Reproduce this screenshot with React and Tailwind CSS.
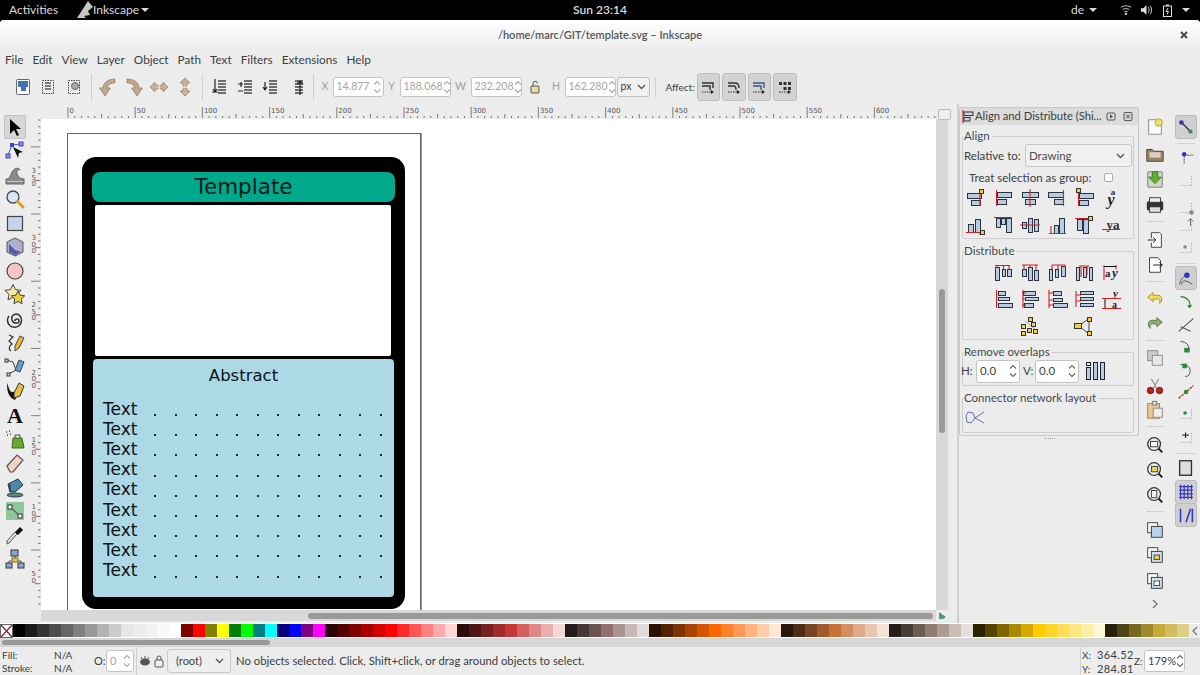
const ui = { fontFamily: 'Lato, "Noto Sans", sans-serif' };

const paletteColors = [
  '#000000', '#1a1a1a', '#333333', '#4d4d4d', '#666666', '#808080', '#999999', '#b3b3b3', '#cccccc', '#e6e6e6', '#ececec', '#f2f2f2', '#f9f9f9', '#ffffff',
  '#800000', '#ff0000', '#808000', '#ffff00', '#008000', '#00ff00', '#008080', '#00ffff', '#000080', '#0000ff', '#800080', '#ff00ff',
  '#2b0000', '#550000', '#800000', '#aa0000', '#d40000', '#ff0000', '#ff2a2a', '#ff5555', '#ff8080', '#ffaaaa', '#ffd5d5',
  '#280b0b', '#501616', '#782121', '#a02c2c', '#c83737', '#d35f5f', '#de8787', '#e9afaf', '#f4d7d7',
  '#241c1c', '#483737', '#6c5353', '#916f6f', '#ac9393', '#c8b7b7', '#e3dbdb',
  '#2b1100', '#552200', '#803300', '#aa4400', '#d45500', '#ff6600', '#ff7f2a', '#ff9955', '#ffb380', '#ffccaa', '#ffe6d5',
  '#28170b', '#502d16', '#784421', '#a05a2c', '#c87137', '#d38d5f', '#deaa87', '#e9c6af', '#f4e3d7',
  '#241f1c', '#483e37', '#6c5d53', '#917c6f', '#ac9d93', '#c8beb7', '#e3dedb',
  '#2b2200', '#554400', '#806600', '#aa8800', '#d4aa00', '#ffcc00', '#ffd42a', '#ffdd55', '#ffe680', '#ffeeaa', '#fff6d5',
  '#28220b', '#504416', '#786721', '#a0892c', '#c8ab37', '#d3bc5f', '#decd87',
];

function Ico({ children, size = 22 }) {
  return (
    <svg width={size} height={size} viewBox="0 0 22 22" fill="none" className="shrink-0">
      {children}
    </svg>
  );
}

function Caret({ className = '' }) {
  return <span className={`inline-block h-0 w-0 border-x-[4px] border-t-[4px] border-x-transparent border-t-[#d8d8d8] ${className}`} />;
}

function Chevron() {
  return (
    <svg width="9" height="6" viewBox="0 0 9 6" fill="none" stroke="#555" strokeWidth="1.3">
      <path d="M1 1l3.5 3.5L8 1" />
    </svg>
  );
}

function Spin({ w, value, disabled, h = 'h-[20px]' }) {
  return (
    <div className={`flex ${h} shrink-0 items-center justify-between rounded-[3px] border border-[#c4c4c4] bg-white pl-[3px] pr-[2px] ${disabled ? 'text-[#a4a4a4]' : 'text-[#3a3f41]'} ${w}`}>
      <span className="whitespace-nowrap">{value}</span>
      <svg width="8" height="14" viewBox="0 0 8 14" fill="none" stroke={disabled ? '#aaa' : '#666'} strokeWidth="1.1" className="shrink-0">
        <path d="M1 4.5L4 1.5l3 3M1 9.5l3 3 3-3" />
      </svg>
    </div>
  );
}

function starPoints(cx, cy, r) {
  const pts = [];
  for (let i = 0; i < 10; i++) {
    const rad = i % 2 === 0 ? r : r * 0.5;
    const a = -Math.PI / 2 + (i * Math.PI) / 5;
    pts.push(`${(cx + rad * Math.cos(a)).toFixed(1)},${(cy + rad * Math.sin(a)).toFixed(1)}`);
  }
  return pts.join(' ');
}

// ---- top toolbar icons
const boxSel = (extra) => (
  <Ico>
    <rect x="5.5" y="4.5" width="11" height="13" stroke="#444" strokeDasharray="1.5 1" />
    {extra}
  </Ico>
);

function Turn({ flip }) {
  return (
    <Ico>
      <g transform={flip ? 'translate(22 0) scale(-1 1)' : ''}>
        <path d="M18 3C12 3 6 6 6 12H2.500L8 20l5.500-8H10.500c0-3 3-5 7.500-5z" fill="#c0a68c" stroke="#8f7a66" strokeWidth="0.7" />
      </g>
    </Ico>
  );
}

function FlipIcon({ vertical }) {
  return (
    <Ico>
      <g transform={vertical ? 'rotate(90 11 11)' : ''}>
        <path d="M2 11l5-5v3h8V6l5 5-5 5v-3H7v3z" fill="#c9b29a" stroke="#8f7a66" strokeWidth="0.7" />
        <path d="M11 7v8" stroke="#fff" strokeWidth="1" />
      </g>
    </Ico>
  );
}

function Layering({ arrow }) {
  return (
    <Ico>
      <path d="M10 5h8M10 8h8M10 11h8M10 14h8M10 17h8" stroke="#444" strokeWidth="1.6" />
      <path d={arrow} stroke="#222" strokeWidth="1.2" fill="none" />
    </Ico>
  );
}

function AffectIcon({ variant }) {
  return (
    <Ico>
      {variant === 3 ? (
        <g fill="#333">
          <rect x="5" y="6" width="3" height="3" />
          <rect x="9.500" y="6" width="3" height="3" />
          <rect x="14" y="6" width="3" height="3" />
          <rect x="9.500" y="11" width="3" height="3" />
          <rect x="14" y="11" width="3" height="3" />
        </g>
      ) : (
        <path d={variant === 1 ? 'M5 7h7c3 0 4 2 4 5M5 10h6c2 0 2 2 2 4' : 'M5 7h11v5M5 10h8v4'} stroke={variant === 2 ? '#3b5a80' : '#333'} strokeWidth="1.400" />
      )}
      <path d="M5 16h9" stroke="#333" strokeWidth="1" strokeDasharray="1.500 1" />
      <path d="M14 14l3 2-3 2z" fill="#222" />
    </Ico>
  );
}

function Toolbar() {
  const Sep = () => <div className="mx-[4px] h-[26px] w-px bg-[#cfcfcf]" />;
  const Btn = ({ children }) => <div className="flex w-[25.500px] justify-center">{children}</div>;
  return (
    <div className="flex h-[33px] items-center pl-[10px] pt-[1px] text-[10.500px] text-[#a0a0a0]">
      <Btn>
        <Ico>
          <rect x="4.500" y="3.500" width="13" height="15" rx="1" fill="#fff" stroke="#667" />
          <rect x="6" y="5" width="10" height="6" fill="#3f73b5" />
          <rect x="9" y="11" width="5" height="4" fill="#3f73b5" />
        </Ico>
      </Btn>
      <Btn>{boxSel(<path d="M8 7h6M8 10h6M8 13h6" stroke="#555" strokeWidth="1.500" />)}</Btn>
      <Btn>{boxSel(<circle cx="12" cy="10" r="3.500" fill="#aaa" stroke="#666" />)}</Btn>
      <Sep />
      <Btn><Turn /></Btn>
      <Btn><Turn flip /></Btn>
      <Btn><FlipIcon /></Btn>
      <Btn><FlipIcon vertical /></Btn>
      <Sep />
      <Btn><Layering arrow="M7 3v13M4 16h6M5 13l2 3 2-3" /></Btn>
      <Btn><Layering arrow="M4 8h5M7 6v5M4 15h5" /></Btn>
      <Btn><Layering arrow="M6 6v7M4 11l2 3 2-3" /></Btn>
      <Btn><Layering arrow="M15 19V6M12 8l3-3 3 3" /></Btn>
      <Sep />
      <span className="w-[15px] text-center">X</span>
      <Spin w="w-[51px]" value="14.877" disabled />
      <span className="w-[16px] text-center">Y</span>
      <Spin w="w-[51px]" value="188.068" disabled />
      <span className="w-[20px] text-center">W</span>
      <Spin w="w-[51px]" value="232.208" disabled />
      <div className="flex w-[26px] justify-center">
        <svg width="12" height="14" viewBox="0 0 12 14" fill="none">
          <rect x="2" y="6" width="8" height="7" rx="1" fill="#e8dc9a" stroke="#555" />
          <path d="M4 6V3.500a2.200 2.200 0 0 1 4.400 0" stroke="#555" />
        </svg>
      </div>
      <span className="w-[17px] text-center">H</span>
      <Spin w="w-[51px]" value="162.280" disabled />
      <div className="ml-[1px] flex h-[20px] w-[33px] items-center justify-between rounded-[3px] border border-[#c0c0c0] bg-[#f1f1f1] px-[3px] text-[#3a3f41]">
        px <Chevron />
      </div>
      <div className="ml-[5px] h-[20px] w-px bg-[#cfcfcf]" />
      <span className="ml-[10px] mr-[7px] w-[24px] whitespace-nowrap text-[10px] text-[#3a3f41]">Affect:</span>
      {[0, 1, 2, 3].map((v) => (
        <div key={v} className="mr-[2px] flex h-[28px] w-[23.500px] items-center justify-center rounded-[3px] border border-[#bdbdbd] bg-[#d3d3d3]">
          <AffectIcon variant={v} />
        </div>
      ))}
    </div>
  );
}

// ---- tool column
const tools = [
  <path d="M6 3v15l4-4 3 6 2-1-3-6h5z" fill="#000" />,
  <><path d="M4 15L8 5l9-1" stroke="#55c" /><rect x="2" y="14" width="4" height="4" fill="#88e" stroke="#44a" /><rect x="6" y="3" width="4" height="4" fill="#44c" /><rect x="15" y="2" width="4" height="4" fill="#88e" stroke="#44a" /><path d="M9 7l10 5-4 1 -1 5z" fill="#111" /></>,
  <><path d="M2 20V15C6 15 6 12 8 8C10 4 15 3 16 6C14 5 12 7 13 10C14 13 17 15 20 15V20z" fill="#8a8a8a" stroke="#666" /><path d="M3 17.500h16" stroke="#c4c4c4" /></>,
  <><circle cx="9" cy="9" r="6" fill="#d8e6f4" stroke="#445" strokeWidth="1.300" /><path d="M13.500 13.500L19 19" stroke="#e0a020" strokeWidth="3" strokeLinecap="round" /></>,
  <rect x="3.500" y="4.500" width="15" height="14" fill="#c3d3e8" stroke="#444" strokeWidth="1.200" />,
  <><path d="M11 2l8 4v10l-8 4-8-4V6z" fill="#b0aed0" stroke="#555" /><path d="M5 8l6 6 6 2-6 3-6-3z" fill="#5858a8" /></>,
  <circle cx="11" cy="11" r="8" fill="#f7c4c8" stroke="#444" strokeWidth="1.200" />,
  <><polygon points={starPoints(9, 9, 8.500)} fill="#f5eaa8" stroke="#444" /><polygon points={starPoints(14, 14, 7)} fill="#e8d040" stroke="#444" /></>,
  <path d="M11 11a2 2 0 1 1 2 2 4.500 4.500 0 1 1 3-7 7 7 0 1 1-11 0" stroke="#333" strokeWidth="1.500" transform="translate(0 2)" />,
  <><path d="M5 3l4 2-4 4 3 3c-3 2-4 5-1 7" stroke="#333" strokeWidth="1.200" /><path d="M11 14L16 4l4 2-5 10-4 3z" fill="#e8b830" stroke="#444" /></>,
  <><path d="M2 4l7 2 3 8M3 19L12 14" stroke="#444" /><rect x="1" y="3" width="3" height="3" fill="#ddd" stroke="#333" /><rect x="3" y="17" width="3" height="3" fill="#ddd" stroke="#333" /><path d="M11 14l4-10 5 2-4 10z" fill="#6a9ac8" stroke="#345" /></>,
  <><path d="M3 3c0 8 1 14 8 17 4-6 1-9-2-8S5 8 3 3z" fill="#111" /><path d="M10 13l5-10 5 3-4 10-6 2z" fill="#e8c040" stroke="#333" /></>,
  <text x="11" y="19" textAnchor="middle" fontSize="22" fontWeight="700" fontFamily="Liberation Serif, serif" fill="#111">A</text>,
  <><path d="M2 4h1M5 3h1M3 7h1M6 6h1" stroke="#444" strokeWidth="1.500" /><path d="M9 10h9l2 10H8z" fill="#66a830" stroke="#3a6a18" /><path d="M11 10V7h5v3" stroke="#445" /></>,
  <path d="M3 14L13 3l6 5-10 12-3 0z" fill="#f6d0c0" stroke="#555" strokeWidth="1.200" />,
  <><ellipse cx="11" cy="19" rx="8" ry="2" fill="#5a8a6a" stroke="#345" /><path d="M4 8l10-5 5 6-8 7H6z" fill="#4a8ab0" stroke="#234" /><path d="M6 8v8" stroke="#222" /></>,
  <><rect x="2" y="2" width="18" height="18" fill="#8cc89a" /><path d="M6 7l10 9" stroke="#333" /><rect x="4" y="5" width="4" height="4" fill="#fff" stroke="#333" /><rect x="14" y="14" width="4" height="4" fill="#fff" stroke="#333" /></>,
  <><path d="M3 20l2-1 8-9-2-2-8 9z" fill="#ddd" stroke="#555" /><path d="M11 8l3-3 2-2 3 3-2 2-3 3z" fill="#111" /></>,
  <><path d="M11 8v5M5 16v-3h12v3" stroke="#555" /><rect x="7" y="2" width="7" height="6" fill="#8aa8c8" stroke="#334" /><rect x="2" y="15" width="6" height="5" fill="#8aa8c8" stroke="#334" /><rect x="14" y="15" width="6" height="5" fill="#8aa8c8" stroke="#334" /><rect x="8" y="10" width="6" height="4" fill="#e8c040" stroke="#864" /></>,
];

function ToolColumn() {
  return (
    <div className="flex w-[30px] shrink-0 flex-col items-center pt-[11px]">
      {tools.map((t, i) => (
        <div key={i} className={`flex h-[24px] w-[22px] shrink-0 items-center justify-center rounded-[2px] ${i === 0 ? 'border border-[#c0c0c0] bg-[#d6d6d6]' : ''}`}>
          <Ico>{t}</Ico>
        </div>
      ))}
    </div>
  );
}

// ---- rulers
function TopRuler() {
  const labels = [0, 50, 100, 150, 200, 250, 300, 350, 400, 450, 500, 550, 600];
  const ticks = Array.from({ length: 135 }, (_, i) => i);
  return (
    <svg width="895" height="15" className="block shrink-0">
      {ticks.map((i) => {
        const x = 27 + i * 6.72;
        const major = i % 10 === 0;
        if (major) return <path key={i} d={`M${x} 3V14`} stroke="#666" strokeWidth="0.8" />;
        return <path key={i} d={`M${x} ${i % 5 === 0 ? 10 : 12}V14`} stroke="#666" strokeWidth="0.9" />;
      })}
      {labels.map((l, i) => (
        <text key={l} x={28.500 + i * 67.2} y="9" fontSize="7" fill="#555" fontFamily="DejaVu Sans, sans-serif">{l}</text>
      ))}
    </svg>
  );
}

function LeftRuler() {
  const labels = ['350', '300', '250', '200', '150', '100', '50'];
  const ticks = Array.from({ length: 74 }, (_, i) => i);
  return (
    <svg width="11" height="491" className="block shrink-0">
      {ticks.map((i) => {
        const y = 1 + i * 6.72;
        const major = (i + 6) % 10 === 0;
        if (major) return <path key={i} d={`M1 ${y}H10.500`} stroke="#666" strokeWidth="0.8" />;
        return <path key={i} d={`M${(i + 6) % 5 === 0 ? 5 : 8} ${y}H10.500`} stroke="#666" strokeWidth="0.9" />;
      })}
      {labels.map((l, i) =>
        l.split('').map((d, k) => (
          <text key={`${l}${k}`} x="1.500" y={54 + i * 67.2 + k * 6.500} fontSize="7" fill="#555" fontFamily="DejaVu Sans, sans-serif">{d}</text>
        )),
      )}
    </svg>
  );
}

// ---- drawing
function Card() {
  const rows = Array.from({ length: 9 }, (_, i) => i);
  const dots = Array.from({ length: 12 }, (_, i) => i);
  return (
    <div className="ml-[14px] mt-[23px] flex w-[323px] flex-col rounded-[14px] bg-black pt-[15px] pb-[12px]" style={{ fontFamily: '"DejaVu Sans", sans-serif' }}>
      <div className="mx-[10px] flex h-[30px] items-center justify-center rounded-[8px] bg-[#00a98c] text-[21.500px] leading-none text-[#0a1a18]">Template</div>
      <div className="ml-[13px] mt-[3px] h-[151px] w-[296px] rounded-[2px] bg-white" />
      <div className="ml-[11px] mt-[3px] h-[238px] w-[301px] rounded-[4px] bg-[#add8e6] text-[#0c1418]">
        <div className="pt-[7px] text-center text-[16.500px] leading-[20px]">Abstract</div>
        <div className="mt-[13px] flex flex-col pl-[10px]">
          {rows.map((r) => (
            <div key={r} className="flex h-[20.200px] items-center text-[17px] leading-none">
              <span className="w-[51px]">Text</span>
              <div className="flex w-[228px] justify-between pt-[12px]">
                {dots.map((d) => (
                  <span key={d} className="h-[2px] w-[2px] bg-[#1a2a30]" />
                ))}
              </div>
            </div>
          ))}
        </div>
      </div>
    </div>
  );
}

function CanvasArea() {
  return (
    <div className="flex w-[918px] shrink-0 flex-col">
      <div className="flex h-[15px] items-end">
        <div className="w-[11px]" />
        <TopRuler />
        <div className="relative flex-1">
          <div className="absolute -top-[10px] left-[2px] h-[11px] w-[13px] rounded-[2px] border border-[#bbb] bg-[#eee]" />
        </div>
      </div>
      <div className="flex h-[491px]">
        <LeftRuler />
        <div className="flex-1 overflow-hidden bg-white pl-[26px] pt-[14px]">
          <div className="h-[520px] w-[354px] border border-b-0 border-[#666] shadow-[1px_0_0_#999]">
            <Card />
          </div>
        </div>
        <div className="flex w-[12px] justify-center bg-[#d8d8d8]">
          <div className="mt-[170px] h-[144px] w-[6px] rounded-full bg-[#999]" />
        </div>
      </div>
      <div className="flex h-[11px] items-stretch">
        <div className="w-[11px]" />
        <div className="flex flex-1 items-center bg-[#d8d8d8] pl-[267px] pr-[3px]">
          <div className="h-[6px] flex-1 rounded-full bg-[#999]" />
        </div>
        <div className="flex w-[12px] items-center justify-center">
          <svg width="9" height="9" viewBox="0 0 9 9"><path d="M1 1l7 5-3 2H1z" fill="#4a9a80" /></svg>
        </div>
      </div>
    </div>
  );
}

// ---- align panel
const R = ({ x, y, w, h }) => <rect x={x + 0.500} y={y + 0.500} width={w} height={h} fill="#b9cbe0" stroke="#2a3440" />;
const Red = ({ d }) => <path d={d} stroke="#d02020" strokeWidth="1.100" />;
const Y = ({ x, y }) => <rect x={x + 0.500} y={y + 0.500} width="4" height="4" fill="#f0d040" stroke="#333" />;
const HStack = (
  <><R x={2} y={6} w={14} h={5} /><R x={6} y={13} w={9} h={5} /></>
);

const alignIcons = [
  <>{HStack}<Red d="M15 4v15" /><Y x={14} y={2} /></>,
  <><R x={5} y={5} w={14} h={5} /><R x={5} y={12} w={9} h={5} /><Red d="M4.500 3v16" /></>,
  <><R x={3} y={5} w={16} h={5} /><R x={6} y={12} w={10} h={5} /><Red d="M11 2v18" /></>,
  <><R x={2} y={5} w={15} h={5} /><R x={8} y={12} w={9} h={5} /><Red d="M17.500 3v16" /></>,
  <><R x={6} y={6} w={14} h={5} /><R x={6} y={13} w={9} h={5} /><Red d="M5.500 3v16M3 5h5" /><Y x={3} y={1} /></>,
  <><text x="11" y="18" fontSize="16" fontWeight="700" fontFamily="Liberation Serif, serif" fontStyle="italic" fill="#222" textAnchor="middle">y</text><text x="13" y="8" fontSize="9" fontWeight="700" fontFamily="Liberation Serif, serif" fill="#334" textAnchor="middle">a</text></>,
  <><R x={3} y={10} w={5} h={8} /><R x={10} y={5} w={5} h={13} /><Red d="M1 18.500h16M15 18v3" /><Y x={15} y={16} /></>,
  <><R x={4} y={4} w={4} h={9} /><R x={9} y={4} w={4} h={6} /><R x={14} y={4} w={5} h={14} /><Red d="M2 3.500h18" /></>,
  <><R x={3} y={8} w={4} h={6} /><R x={9} y={4} w={4} h={14} /><R x={15} y={5} w={4} h={12} /><Red d="M1 11h20" /></>,
  <><R x={8} y={11} w={4} h={8} /><R x={13} y={4} w={5} h={15} /><Red d="M3 19.500h17M5 12v7" /></>,
  <><R x={4} y={5} w={5} h={11} /><R x={10} y={5} w={5} h={14} /><Red d="M2 4.500h14" /><Y x={15} y={2} /></>,
  <><text x="13" y="15" fontSize="13" fontWeight="700" fontFamily="Liberation Serif, serif" fill="#333" textAnchor="middle">ya</text><Red d="M2 15.500h18" /></>,
];

const distributeIcons = [
  <><R x={3} y={6} w={4} h={13} /><R x={10} y={8} w={3} h={7} /><R x={15} y={8} w={4} h={7} /><Red d="M3 4.500h15M5 4v3M11.500 4v4M17 4v4" /></>,
  <><R x={3} y={8} w={4} h={7} /><R x={9} y={6} w={4} h={13} /><R x={15} y={9} w={4} h={10} /><Red d="M3 4h16M5 4v4M11 4v2M17 4v5" /></>,
  <><R x={3} y={8} w={3} h={11} /><R x={9} y={8} w={3} h={8} /><R x={15} y={5} w={4} h={10} /><Red d="M6 4h13M6 4v4M12 4v4M19 4v2" /></>,
  <><R x={3} y={6} w={3} h={13} /><R x={10} y={6} w={3} h={10} /><R x={16} y={6} w={3} h={13} /><Red d="M6 5h10M8 5v11M14 5v9" /></>,
  <><text x="5" y="16" fontSize="11" fontWeight="700" fontFamily="Liberation Serif, serif" fill="#223">a</text><text x="12" y="16" fontSize="13" fontWeight="700" fontStyle="italic" fontFamily="Liberation Serif, serif" fill="#223">y</text><Red d="M4 4v15M16 4v4" /><path d="M4 5.500h12" stroke="#111" /></>,
  <><R x={6} y={3} w={7} h={4} /><R x={6} y={9} w={11} h={3} /><R x={6} y={15} w={14} h={4} /><Red d="M4.500 2v18" /></>,
  <><R x={4} y={3} w={12} h={4} /><R x={6} y={9} w={13} h={3} /><R x={5} y={15} w={9} h={4} /><Red d="M4 2v18M3 5h4M3 11h4M3 17h4" /></>,
  <><R x={7} y={3} w={8} h={4} /><R x={7} y={10} w={9} h={3} /><R x={7} y={15} w={14} h={4} /><Red d="M3 2v18M3 5h4M3 12h4M3 17h4" /></>,
  <><R x={7} y={3} w={13} h={3} /><R x={7} y={9} w={13} h={3} /><R x={7} y={15} w={13} h={3} /><Red d="M3 3v16M3 7h5M3 13h5" /></>,
  <><text x="13" y="9" fontSize="11" fontStyle="italic" fontWeight="700" fontFamily="Liberation Serif, serif" fill="#223">y</text><text x="12" y="20" fontSize="10" fontWeight="700" fontFamily="Liberation Serif, serif" fill="#223">a</text><Red d="M2 10.500h19M2 20.500h19" /><path d="M5 11v9" stroke="#111" /></>,
];

function Cluster() {
  return (
    <Ico>
      <path d="M6 6l10 8" stroke="#aaa" />
      <Y x={9} y={2} /><Y x={2} y={9} /><Y x={12} y={7} /><Y x={8} y={13} /><Y x={2} y={16} /><Y x={14} y={14} />
    </Ico>
  );
}

function Tree() {
  return (
    <Ico>
      <path d="M7 10l8-6M7 12l8 6M16 5v13" stroke="#445" />
      <rect x="1.500" y="8.500" width="7" height="5" fill="#f0d040" stroke="#333" />
      <Y x={14} y={2} /><Y x={14} y={16} />
    </Ico>
  );
}

function IconCell({ children }) {
  return <div className="flex h-[27px] w-[27px] items-center justify-center">{children}</div>;
}

function AlignPanel() {
  const frame = 'ml-[2px] mr-[4px] rounded-[2px] border border-[#cdcdcd] px-[1px]';
  const legend = 'pr-[2px] text-[11.500px] leading-[14px] text-[#454a4c]';
  return (
    <div className="flex w-[183px] shrink-0 flex-col border-l-2 border-[#cfcfcf] pt-[3px]" style={ui}>
      <div className="w-[180px] rounded-[2px] border border-[#c8c8c8] pb-[2px]">
        <div className="flex h-[17px] items-center bg-[#dcdcdc] text-[#3a3f41]">
          <svg width="14" height="15" viewBox="0 0 14 15" fill="none" className="ml-[1px] shrink-0">
            <path d="M2 1v13" stroke="#c03030" strokeWidth="1.300" />
            <rect x="3" y="3" width="9" height="3.500" fill="#c8d6e6" stroke="#333" />
            <rect x="3" y="8.500" width="6" height="3.500" fill="#c8d6e6" stroke="#333" />
          </svg>
          <span className="w-[127px] whitespace-nowrap text-[11.200px]">Align and Distribute (Shi...</span>
          <svg width="11" height="11" viewBox="0 0 11 11" className="ml-[4px] shrink-0"><rect x="1" y="2" width="8" height="7" rx="1" fill="none" stroke="#555" /><path d="M4 3.500l3 2-3 2z" fill="#444" /></svg>
          <svg width="11" height="11" viewBox="0 0 11 11" className="ml-[6px] shrink-0" fill="none"><rect x="1" y="1.500" width="8" height="8" rx="1" stroke="#555" /><path d="M3 3.500l4 4M7 3.500l-4 4" stroke="#333" /></svg>
        </div>

        <fieldset className={`${frame} mt-[4px] h-[110px]`}>
          <legend className={legend}>Align</legend>
          <div className="flex items-center justify-between pt-[1px] text-[11.500px] text-[#3a3f41]">
            <span className="whitespace-nowrap">Relative to:</span>
            <div className="flex h-[23px] w-[107px] items-center justify-between rounded-[3px] border border-[#c8c8c8] bg-[#f0f0f0] pl-[3px] pr-[6px] text-[#4a4f51]">
              Drawing <Chevron />
            </div>
          </div>
          <div className="mt-[1px] flex h-[19px] items-center justify-between pl-[5px] pr-[19px] text-[11.500px] text-[#3a3f41]">
            <span className="whitespace-nowrap">Treat selection as group:</span>
            <span className="h-[9px] w-[9px] rounded-[2px] border border-[#aaa] bg-white" />
          </div>
          <div className="-ml-[2px] -mt-[3px] grid grid-cols-[repeat(6,27px)]">
            {alignIcons.map((ic, i) => (
              <IconCell key={i}><Ico>{ic}</Ico></IconCell>
            ))}
          </div>
        </fieldset>

        <fieldset className={`${frame} mt-[5px] h-[96px]`}>
          <legend className={legend}>Distribute</legend>
          <div className="-ml-[2px] grid grid-cols-[repeat(6,27px)]">
            {distributeIcons.map((ic, i) => (
              <div key={i} className={i === 0 || i === 5 ? 'col-start-2' : ''}>
                <IconCell><Ico>{ic}</Ico></IconCell>
              </div>
            ))}
            <div className="col-start-3"><IconCell><Cluster /></IconCell></div>
            <div className="col-start-5"><IconCell><Tree /></IconCell></div>
          </div>
        </fieldset>

        <fieldset className={`${frame} mt-[5px] h-[41px]`}>
          <legend className={legend}>Remove overlaps</legend>
          <div className="flex h-[24px] items-center text-[11.500px] text-[#3a3f41]">
            <span className="-ml-[3px] w-[15px]">H:</span>
            <Spin w="w-[44px]" value="0.0" h="h-[23px]" />
            <span className="ml-[3px] w-[12px]">V:</span>
            <Spin w="w-[44px]" value="0.0" h="h-[23px]" />
            <svg width="22" height="20" viewBox="0 0 22 20" className="ml-[6px]">
              <rect x="1.500" y="6.500" width="4" height="12" fill="#b9cbe0" stroke="#223" />
              <rect x="1.500" y="1.500" width="4" height="3" fill="#e8e8e8" stroke="#223" />
              <rect x="8.500" y="1.500" width="4" height="17" fill="#b9cbe0" stroke="#223" />
              <rect x="15.500" y="1.500" width="4" height="17" fill="#b9cbe0" stroke="#223" />
            </svg>
          </div>
        </fieldset>

        <fieldset className={`${frame} mt-[5px] h-[42px]`}>
          <legend className={legend}>Connector network layout</legend>
          <svg width="22" height="18" viewBox="0 0 22 18" fill="none" stroke="#6a6ab8" className="mt-[3px]">
            <path d="M4 4l5 1 2 5-4 5-4-1-1-6zM11 10l9-6M11 10l9 5" />
          </svg>
        </fieldset>
      </div>
      <div className="mt-[2px] flex justify-center gap-[1px]">
        {[0, 1, 2, 3, 4, 5].map((d) => (
          <span key={d} className="h-px w-px bg-[#999]" />
        ))}
      </div>
    </div>
  );
}

// ---- right-hand command and snap bars: [icon, step to next icon, separator below]
const commands = [
  [<><path d="M4 3h12l2 3v13H4z" fill="#fafafa" stroke="#888" /><circle cx="15" cy="6" r="4" fill="#f0e060" stroke="#b8a030" /></>, 27],
  [<><path d="M2 6h6l2 2h10v11H2z" fill="#9a8468" stroke="#4a3a28" /><rect x="5" y="9" width="12" height="6" fill="#d8d0c0" /></>, 25],
  [<><rect x="3" y="3" width="16" height="17" rx="1" fill="#d0d8c8" stroke="#777" /><path d="M8 3h6v6h4l-7 7-7-7h4z" fill="#60b030" stroke="#3a7a18" /></>, 26],
  [<><rect x="2" y="7" width="18" height="10" rx="2" fill="#333" /><rect x="5" y="3" width="12" height="5" fill="#eee" stroke="#333" /><rect x="5" y="13" width="12" height="6" fill="#ddd" stroke="#333" /></>, 35, true],
  [<><path d="M7 3h9l2 2v14H7v-5M7 9V3" stroke="#333" fill="#fff" /><path d="M3 11h8M9 8l3 3-3 3" stroke="#111" /></>, 25],
  [<><path d="M5 3h9l3 3v13H5z" stroke="#333" fill="#fff" /><path d="M9 11h10M16 8l3 3-3 3" stroke="#111" /></>, 34, true],
  [<path d="M9 4L3 9l6 5v-3h5c2 0 3 1 2 5 3-2 4-9-2-9H9z" fill="#f0dc60" stroke="#a89020" />, 25],
  [<path d="M13 4l6 5-6 5v-3H8c-2 0-3 1-2 5-3-2-4-9 2-9h5z" fill="#8caa78" stroke="#5a7a48" />, 34, true],
  [<><rect x="3" y="3" width="11" height="11" fill="#ccc" stroke="#888" /><rect x="8" y="8" width="11" height="11" fill="#e8e8e8" stroke="#888" /></>, 28],
  [<><path d="M7 3l6 11M15 3L9 14" stroke="#999" strokeWidth="1.500" /><circle cx="6" cy="16" r="3.500" fill="#c02020" stroke="#701010" /><circle cx="16" cy="16" r="3.500" fill="#c02020" stroke="#701010" /></>, 24],
  [<><rect x="3" y="4" width="13" height="16" fill="#e8c890" stroke="#a08040" /><rect x="8" y="1.500" width="5" height="4" fill="#ddd" stroke="#777" /><rect x="9" y="9" width="10" height="10" fill="#eee" stroke="#888" /></>, 35, true],
  [<><circle cx="10" cy="10" r="7" fill="#f0f4f8" stroke="#333" strokeWidth="1.400" /><rect x="6" y="7" width="8" height="6" stroke="#333" /><path d="M15 15l4 4" stroke="#111" strokeWidth="2" /></>, 25],
  [<><circle cx="10" cy="10" r="7" fill="#f0f4f8" stroke="#333" strokeWidth="1.400" /><rect x="7" y="7" width="7" height="6" fill="#e8d050" stroke="#333" /><path d="M15 15l4 4" stroke="#111" strokeWidth="2" /></>, 25],
  [<><circle cx="10" cy="10" r="7" fill="#f0f4f8" stroke="#333" strokeWidth="1.400" /><rect x="7" y="6" width="6" height="8" stroke="#333" /><path d="M15 15l4 4" stroke="#111" strokeWidth="2" /></>, 35, true],
  [<><rect x="3" y="3" width="11" height="11" fill="#fff" stroke="#333" /><rect x="7" y="7" width="12" height="12" fill="#b9d3ec" stroke="#333" /></>, 25],
  [<><rect x="3" y="3" width="11" height="11" fill="#fff" stroke="#333" /><rect x="7" y="7" width="12" height="12" fill="#cfe0f0" stroke="#333" /><rect x="10" y="11" width="6" height="5" fill="#e8d050" stroke="#444" /></>, 26],
  [<><rect x="3" y="3" width="11" height="11" fill="#fff" stroke="#333" /><rect x="7" y="7" width="12" height="12" fill="#cfe0f0" stroke="#333" /><rect x="10" y="11" width="6" height="5" fill="#fff" stroke="#444" /></>, 23],
];

const snapBase = (mark) => (
  <><path d="M5 17h12V5" stroke="#aaa" strokeDasharray="1.500 1.500" />{mark}</>
);

const snaps = [
  [<><path d="M5 5l12 12" stroke="#334" strokeWidth="1.500" /><circle cx="6" cy="6" r="2.500" fill="#33a" /><rect x="14" y="14" width="4" height="4" fill="#3a8a6a" /></>, 30, true, true],
  [<><path d="M9 18V9h10" stroke="#335" strokeDasharray="2 1" /><circle cx="9" cy="8" r="2.500" fill="#33c" /></>, 23],
  [snapBase(null), 27],
  [snapBase(<circle cx="17" cy="17" r="2.500" fill="#888" />), 18],
  [snapBase(<path d="M16 4v8M13 7l3-3 3 3" stroke="#666" />), 22],
  [snapBase(<circle cx="10" cy="11" r="2" fill="#888" />), 31, true],
  [<><path d="M4 18c1-7 6-9 8-10" stroke="#556" /><path d="M6 18c1-4 4-6 12 0" stroke="#444" /><circle cx="12" cy="8" r="3" fill="#33c" /></>, 24, false, true],
  [<><path d="M5 5c6 0 12 5 10 12" stroke="#1a8a30" strokeWidth="1.300" /><path d="M12 15l3 3 3-4z" fill="#1a8a30" /></>, 23],
  [<path d="M3 18L19 4M5 13l11 5" stroke="#555" strokeWidth="1.200" />, 22],
  [<><path d="M5 5c6 0 12 5 8 12" stroke="#444" /><rect x="9" y="12" width="6" height="5" fill="#2a8a3a" /></>, 23],
  [<><path d="M5 5c8 0 12 3 10 10-1 3-3 3-5 3" stroke="#444" /><rect x="7" y="4" width="5" height="5" fill="#2a8a3a" /></>, 22],
  [<><path d="M3 18L19 4" stroke="#d03030" strokeWidth="1.500" strokeDasharray="3 1" /><circle cx="11" cy="11" r="2.500" fill="#2a8a3a" /></>, 21],
  [snapBase(<circle cx="10" cy="11" r="2" fill="#2a8a3a" />), 24],
  [snapBase(<path d="M7 9h7M10.500 6v6" stroke="#333" strokeWidth="1.300" />), 31, true],
  [<rect x="4" y="3" width="13" height="16" fill="#ddd" stroke="#333" strokeWidth="1.500" />, 24],
  [<path d="M3.500 5h15M3.500 9h15M3.500 13h15M3.500 17h15M5 3v16M9 3v16M13 3v16M17 3v16" stroke="#3333cc" strokeWidth="1.300" />, 23, false, true],
  [<path d="M5 4v15M16 4L11 19M18 4v15" stroke="#3333cc" strokeWidth="1.700" />, 24, false, true],
];

function BarItem({ icon, step, sep, on }) {
  return (
    <div className="flex w-full shrink-0 flex-col items-center" style={{ height: step }}>
      <div className={`flex h-[24px] w-[22px] shrink-0 items-center justify-center rounded-[3px] ${on ? 'border border-[#bbb] bg-[#cfcfcf]' : ''}`}>
        <Ico size={20}>{icon}</Ico>
      </div>
      {sep && <div className="mt-[4px] h-px w-[18px] shrink-0 bg-[#d0d0d0]" />}
    </div>
  );
}

function CommandBars() {
  return (
    <div className="flex flex-1 pt-[11px]">
      <div className="flex w-[30px] flex-col items-center">
        {commands.map(([ic, step, sep], i) => (
          <BarItem key={i} icon={ic} step={step} sep={sep} />
        ))}
        <div className="mt-[7px]">
          <svg width="8" height="10" viewBox="0 0 8 10" fill="none" stroke="#777" strokeWidth="1.400"><path d="M2 1l4 4-4 4" /></svg>
        </div>
      </div>
      <div className="ml-[1px] flex w-[30px] flex-col items-center">
        {snaps.map(([ic, step, sep, on], i) => (
          <BarItem key={i} icon={ic} step={step} sep={sep} on={on} />
        ))}
      </div>
    </div>
  );
}

// ---- bottom
function Palette() {
  return (
    <div className="flex h-[15px] items-stretch bg-white pt-[1px]">
      <svg width="13" height="14" viewBox="0 0 13 14" className="shrink-0">
        <rect x="0.500" y="0.500" width="12" height="13" fill="#fff" stroke="#666" />
        <path d="M1 1l11 12M12 1L1 13" stroke="#802020" strokeWidth="1.200" />
      </svg>
      {paletteColors.map((c, i) => (
        <div key={i} className="mb-[1px] w-[12px] shrink-0" style={{ backgroundColor: c }} />
      ))}
      <div className="flex flex-1 items-center justify-center bg-[#ececec]">
        <svg width="6" height="10" viewBox="0 0 6 10" fill="none" stroke="#777" strokeWidth="1.300"><path d="M5 1L1 5l4 4" /></svg>
      </div>
    </div>
  );
}

function StatusBar() {
  return (
    <div className="flex h-[28px] items-center text-[11px] text-[#3a3f41]">
      <div className="flex w-[90px] flex-col pl-[2px] pt-[2px] text-[10px] leading-[13px]">
        <div className="flex"><span className="w-[52px]">Fill:</span><span>N/A</span></div>
        <div className="flex"><span className="w-[52px]">Stroke:</span><span>N/A</span></div>
      </div>
      <span className="ml-[4px] w-[12px]">O:</span>
      <Spin w="w-[28px]" value="0" disabled h="h-[22px]" />
      <div className="ml-[2px] h-[28px] w-px bg-[#d0d0d0]" />
      <svg width="14" height="14" viewBox="0 0 14 14" className="ml-[1px]" fill="#555"><ellipse cx="7" cy="8" rx="5" ry="3.500" /><path d="M3 3l2 3M11 3L9 6M7 2v3" stroke="#555" /></svg>
      <svg width="12" height="14" viewBox="0 0 12 14" fill="none" className="ml-[1px]"><rect x="2" y="6" width="8" height="7" rx="1" fill="#eee" stroke="#555" /><path d="M4 6V4a2 2 0 0 1 4 0v2" stroke="#555" /></svg>
      <div className="ml-[2px] flex h-[24px] w-[64px] items-center justify-between rounded-[3px] border border-[#c8c8c8] bg-[#efefef] pl-[8px] pr-[6px]">
        (root) <Chevron />
      </div>
      <span className="ml-[5px] whitespace-nowrap text-[11.300px]">No objects selected. Click, Shift+click, or drag around objects to select.</span>
      <div className="ml-auto flex h-full w-[120px] items-center">
        <div className="h-full w-px bg-[#d0d0d0]" />
        <div className="ml-[1px] flex w-[52px] flex-col pt-[2px] text-[11px] leading-[14px]">
          <div className="flex"><span className="w-[15px] text-[10px]">X:</span><span className="tracking-[0.4px]">364.52</span></div>
          <div className="flex"><span className="w-[15px] text-[10px]">Y:</span><span className="tracking-[0.4px]">284.81</span></div>
        </div>
        <span className="w-[10px] text-[10px]">Z:</span>
        <Spin w="w-[41px]" value="179%" h="h-[22px]" />
      </div>
    </div>
  );
}

export default function App() {
  return (
    <div className="flex h-[675px] w-[1200px] flex-col overflow-hidden bg-black" style={ui}>
      <div className="relative flex h-[20px] shrink-0 items-center text-[12px] text-[#dcdcdc]">
        <span className="ml-[9px] w-[52px] whitespace-nowrap">Activities</span>
        <svg width="24" height="20" viewBox="0 0 24 20" className="ml-[14px]">
          <path d="M2 18L13 1l5 6-5 4 2 4-6 1 2 2z" fill="#e8e8e8" opacity="0.85" />
        </svg>
        <span className="-ml-[11px] w-[48px] translate-x-[5px]">Inkscape</span>
        <Caret className="translate-x-[5px]" />
        <span className="absolute left-1/2 -translate-x-1/2 font-semibold">Sun 23:14</span>
        <div className="absolute right-0 flex items-center">
          <span>de</span>
          <Caret className="ml-[5px]" />
          <svg width="12" height="12" viewBox="0 0 14 12" fill="none" stroke="#ddd" className="ml-[23px]"><path d="M1 3c3-2.500 9-2.500 12 0M3 5.500c2-1.500 6-1.500 8 0M5 8c1-.700 3-.700 4 0" /><circle cx="7" cy="10.500" r="1" fill="#ddd" /></svg>
          <svg width="13" height="12" viewBox="0 0 14 12" className="ml-[8px]"><path d="M1 4h2.500L7 1v10L3.500 8H1z" fill="#ddd" /><path d="M9 3c1 1.500 1 4.500 0 6M11 1.500c2 2.500 2 6.500 0 9" stroke="#ddd" fill="none" /></svg>
          <svg width="9" height="13" viewBox="0 0 9 13" fill="none" className="ml-[10px]"><rect x="0.500" y="2" width="8" height="10.500" stroke="#ddd" /><rect x="3" y="0.500" width="3" height="1.500" fill="#ddd" /><path d="M5 4L3 7.500h2.500L4 10.500" stroke="#ddd" /></svg>
          <Caret className="ml-[10px] mr-[10px]" />
        </div>
      </div>

      <div className="flex flex-1 flex-col overflow-hidden rounded-t-[4px] bg-[#ececec] text-[#3a3f41]">
        <div className="relative flex h-[30px] shrink-0 items-center justify-center bg-gradient-to-b from-white to-[#ececec] text-[11px] font-semibold text-[#53585a]">
          /home/marc/GIT/template.svg – Inkscape
          <svg width="8" height="8" viewBox="0 0 8 8" className="absolute right-[12px]" stroke="#444" strokeWidth="1.800"><path d="M1 1l6 6M7 1L1 7" /></svg>
        </div>
        <div className="flex h-[20px] shrink-0 items-center gap-[9px] pl-[5px] text-[11.750px]">
          {['File', 'Edit', 'View', 'Layer', 'Object', 'Path', 'Text', 'Filters', 'Extensions', 'Help'].map((m) => (
            <span key={m}>{m}</span>
          ))}
        </div>
        <Toolbar />
        <div className="flex h-[520px] shrink-0 pt-[1px]">
          <ToolColumn />
          <CanvasArea />
          <div className="w-[9px] shrink-0" />
          <AlignPanel />
          <CommandBars />
        </div>
        <Palette />
        <div className="flex h-[9px] shrink-0 items-center bg-[#d6d6d6] pl-[2px]">
          <div className="h-[5px] w-[268px] rounded-full bg-[#999]" />
        </div>
        <StatusBar />
      </div>
    </div>
  );
}
